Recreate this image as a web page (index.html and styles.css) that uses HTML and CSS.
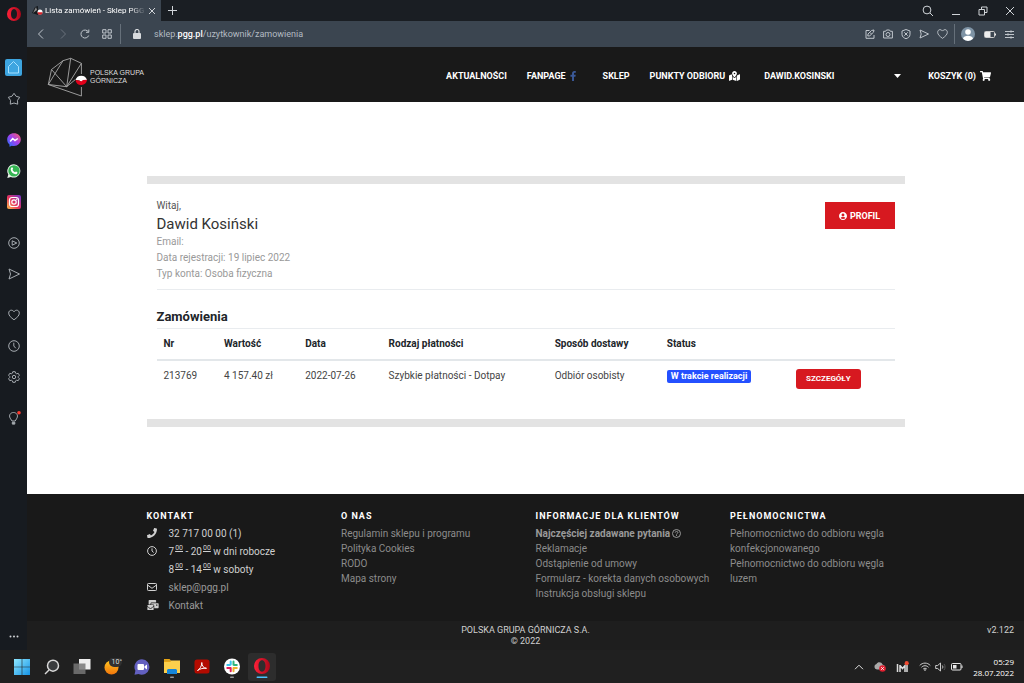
FILE: index.html
```html
<!DOCTYPE html>
<html lang="pl">
  <head>
    <meta charset="UTF-8" />
    <title>Lista zamówień - Sklep PGG</title>
    <link rel="stylesheet" href="styles.css">
  </head>

  <body>
    <div class="desktop">
      <div class="browser">
        <nav class="sidebar" aria-label="Opera">
          <button class="opera-menu" aria-label="Menu">
            <svg width="14" height="14" viewBox="0 0 14 14"><defs><linearGradient id="op" x1="0" x2="1"><stop offset="0" stop-color="#ff2038"/><stop offset="1" stop-color="#a8081a"/></linearGradient></defs><path fill="url(#op)" fill-rule="evenodd" d="M7 0a7 7 0 1 0 0 14A7 7 0 1 0 7 0zM7 2c2 0 3 2.300 3 5s-1 5-3 5-3-2.300-3-5 1-5 3-5z"/></svg>
          </button>
          <div class="side-group">
            <button class="side-item" aria-label="Home">
              <svg width="17" height="17" viewBox="0 0 17 17"><rect width="17" height="17" rx="2" fill="#3da5e0"/><path d="M3.500 7.500 8.500 2.500l5 5V14h-10z" fill="none" stroke="#a5e0ff" stroke-linejoin="round"/></svg>
            </button>
            <button class="side-item" aria-label="Zakładki">
              <svg class="line" width="14" height="14" viewBox="0 0 14 14"><path d="M7 1.300 9.100 4.300l3.600 1-2.200 3 .2 3.900L7 11l-3.700 1.200.2-3.900-2.200-3 3.600-1z"/></svg>
            </button>
          </div>
          <div class="side-group">
            <button class="side-item" aria-label="Messenger">
              <svg width="14" height="14" viewBox="0 0 14 14"><defs><linearGradient id="ms" x1="0" y1="1" x2="1" y2="0"><stop offset="0" stop-color="#1a78ff"/><stop offset=".5" stop-color="#a040f0"/><stop offset="1" stop-color="#ff6060"/></linearGradient></defs><path fill="url(#ms)" d="M7 .3c4 0 6.800 2.700 6.800 6.300S11 13 7 13c-.8 0-1.500-.1-2.200-.3L2.500 13.700v-2.100C1 10.500.2 8.800.2 6.600.2 3 3 .3 7 .3z"/><path d="m3.200 8.500 2.500-3 2.300 2 2.800-2" fill="none" stroke="#fff" stroke-width="1.500"/></svg>
            </button>
            <button class="side-item" aria-label="WhatsApp">
              <svg width="14" height="14" viewBox="0 0 14 14"><path fill="#e8f3e9" d="M7 .2A6.700 6.700 0 1 1 3.900 13L.3 13.900l1-3.500A6.700 6.700 0 0 1 7 .2z"/><circle cx="7" cy="6.900" r="5.700" fill="#35b653"/><path fill="#fff" d="M4.600 3.500c.6-.5 1-.1 1.500 1.300l-.6 1c.5 1.200 1.300 2 2.600 2.500l.8-.8c1.300.5 1.800.9 1.500 1.400-.5 1.500-2 1.500-3.300.9C5.600 9.200 4.400 7.900 3.900 6.300c-.4-1.200-.1-2.200.7-2.800z"/></svg>
            </button>
            <button class="side-item" aria-label="Instagram">
              <svg width="14" height="14" viewBox="0 0 14 14"><defs><linearGradient id="ig" x1="0" y1="1" x2="1" y2="0"><stop offset="0" stop-color="#fdc04a"/><stop offset=".45" stop-color="#e8335c"/><stop offset="1" stop-color="#6c35d0"/></linearGradient></defs><rect width="14" height="14" rx="2" fill="url(#ig)"/><g fill="none" stroke="#fff" stroke-width="1.200"><rect x="2.500" y="2.500" width="9" height="9" rx="2.500"/><circle cx="7" cy="7" r="2.200"/></g><circle cx="9.700" cy="4.300" r=".7" fill="#fff"/></svg>
            </button>
          </div>
          <div class="side-group">
            <button class="side-item" aria-label="Player">
              <svg class="line" width="12" height="12" viewBox="0 0 12 12"><circle cx="6" cy="6" r="5.300"/><path d="M4.200 3.800v4.400L8.800 6z"/></svg>
            </button>
            <button class="side-item" aria-label="Flow">
              <svg class="line" width="12" height="12" viewBox="0 0 12 12"><path d="M1 1l10.500 5L1 11l1.500-5z"/></svg>
            </button>
          </div>
          <div class="side-group">
            <button class="side-item" aria-label="Ulubione">
              <svg class="line" width="12" height="12" viewBox="0 0 12 12"><path d="M6 10.800C3 8.600.7 6.700.7 4.100.7 2.300 1.900 1.200 3.300 1.200 4.500 1.200 5.400 1.800 6 2.800c.6-1 1.500-1.600 2.700-1.600 1.400 0 2.600 1.100 2.600 2.900 0 2.600-2.300 4.500-5.300 6.700z"/></svg>
            </button>
            <button class="side-item" aria-label="Historia">
              <svg class="line" width="12" height="12" viewBox="0 0 12 12"><circle cx="6" cy="6" r="5.300"/><path d="M5.800 2.700V6l2 2.300"/></svg>
            </button>
            <button class="side-item" aria-label="Ustawienia">
              <svg class="line" width="12" height="12" viewBox="0 0 12 12"><path d="M4.800.7h2.400l.4 1.500 1.100.6 1.500-.5 1.200 2-1.100 1.100v1.200l1.100 1.100-1.200 2-1.500-.5-1.100.6-.4 1.500H4.800l-.4-1.500-1.100-.6-1.500.5-1.200-2 1.100-1.100V5.400L.6 4.300l1.200-2 1.500.5 1.100-.6z"/><circle cx="6" cy="6" r="1.700"/></svg>
            </button>
          </div>
          <div class="side-group">
            <button class="side-item" aria-label="Porady">
              <svg class="line" width="14" height="14" viewBox="0 0 14 14"><path d="M5 10 3.200 7.200C1.500 4.200 3.500 1.500 6.500 1.500s5 2.700 3.400 5.700L8.200 10z"/><path fill="#a6abb0" d="M5.300 11.300h2.500v1.800H5.300z"/><circle cx="12" cy="1.800" r="1.800" fill="#ff3b30" stroke="none"/></svg>
            </button>
          </div>
          <button class="side-more" aria-label="Więcej">
            <svg width="10" height="3" viewBox="0 0 10 3" fill="#d0d3d6"><circle cx="1.500" cy="1.500" r="1"/><circle cx="5" cy="1.500" r="1"/><circle cx="8.500" cy="1.500" r="1"/></svg>
          </button>
        </nav>

        <div class="window">
          <div class="tab-bar">
            <div class="tab">
              <svg width="11" height="10" viewBox="0 0 11 10"><path d="M0 7 3 1l3-1v9z" fill="#15191d"/><path d="M1 7 4 1l1 3z" fill="#888"/><circle cx="8" cy="6" r="2.500" fill="#fff"/><path d="M5.500 6.200h5A2.500 2.500 0 0 1 5.500 6.200z" fill="#d8232a"/></svg>
              <span class="tab-title">Lista zamówień - Sklep PGG</span>
              <button class="tab-btn" aria-label="Zamknij kartę">
                <svg class="line" width="8" height="8" viewBox="0 0 8 8"><path d="M1 1l6 6M7 1 1 7"/></svg>
              </button>
            </div>
            <button class="tab-btn new-tab" aria-label="Nowa karta">
              <svg class="line" width="9" height="9" viewBox="0 0 9 9"><path d="M4.500 0v9M0 4.500h9"/></svg>
            </button>
            <div class="window-btns">
              <button class="tab-btn" aria-label="Szukaj"><svg class="line" width="12" height="12" viewBox="0 0 12 12"><circle cx="5" cy="5" r="3.900"/><path d="m8 8 3 3"/></svg></button>
              <button class="tab-btn" aria-label="Minimalizuj"><svg class="line" width="10" height="10" viewBox="0 0 10 10"><path d="M1 8.500h8"/></svg></button>
              <button class="tab-btn" aria-label="Przywróć"><svg class="line" width="10" height="10" viewBox="0 0 10 10"><path d="M1 3.500h5.500V9H1zM3.500 3.500V1H9v5.500H6.500"/></svg></button>
              <button class="tab-btn" aria-label="Zamknij"><svg class="line" width="10" height="10" viewBox="0 0 10 10"><path d="m1 1 8 8M9 1 1 9"/></svg></button>
            </div>
          </div>

          <div class="toolbar">
            <div class="nav-btns">
              <button class="tab-btn" aria-label="Wstecz"><svg class="line" width="10" height="10" viewBox="0 0 10 10"><path d="M7 .5 2.500 5 7 9.500"/></svg></button>
              <button class="tab-btn dim" aria-label="Dalej"><svg class="line" width="10" height="10" viewBox="0 0 10 10"><path d="M3 .5 7.500 5 3 9.500"/></svg></button>
              <button class="tab-btn" aria-label="Odśwież"><svg class="line" width="10" height="10" viewBox="0 0 10 10"><path d="M8.700 6.500A4 4 0 1 1 8.300 2.800M8.800.5v2.800H6"/></svg></button>
              <button class="tab-btn" aria-label="Szybkie wybieranie"><svg class="line" width="10" height="10" viewBox="0 0 10 10"><path d="M.7.7H4V4H.7zM6 .7h3.300V4H6zM.7 6H4v3.300H.7zM6 6h3.300v3.300H6z"/></svg></button>
            </div>
            <div class="address">
              <svg width="8" height="10" viewBox="0 0 8 10"><rect y="4" width="8" height="6" rx="1" fill="#d8dbde"/><path d="M2 4V2.500a2 2 0 0 1 4 0V4" fill="none" stroke="#d8dbde" stroke-width="1.200"/></svg>
              <span class="url">sklep.<b>pgg.pl</b>/uzytkownik/zamowienia</span>
            </div>
            <div class="tools">
              <button class="tab-btn" aria-label="Edytuj"><svg class="line" width="10" height="10" viewBox="0 0 10 10"><path d="M4.500 1.500H1v7.800h8V6M9 1 6.500 1.500 3 5l-.2 2 2-.2 3.700-3.600zM5 3.500l1.500 1.500"/></svg></button>
              <button class="tab-btn" aria-label="Zrzut ekranu"><svg class="line" width="10" height="10" viewBox="0 0 10 10"><path d="M.6 2.300h2L3.500 1h3l.9 1.300h2V9H.6z"/><circle cx="5" cy="5.500" r="2"/></svg></button>
              <button class="tab-btn" aria-label="Blokada reklam"><svg class="line" width="10" height="10" viewBox="0 0 10 10"><path d="M5 .5 9 2v3.500C9 7.800 7 9 5 9.700 3 9 1 7.800 1 5.500V2zM3.300 3.300l3.400 3.400M6.700 3.300 3.300 6.700"/></svg></button>
              <button class="tab-btn" aria-label="Wyślij"><svg class="line" width="10" height="10" viewBox="0 0 10 10"><path d="M1 1l8.500 4L1 9l1.200-4z"/></svg></button>
              <button class="tab-btn" aria-label="Dodaj zakładkę"><svg class="line" width="11" height="10" viewBox="0 0 12 11"><path d="M6 10.300C3 8.100.7 6.200.7 3.600.7 1.800 1.900.7 3.300.7 4.500.7 5.400 1.300 6 2.300 6.600 1.300 7.500.7 8.700.7c1.400 0 2.600 1.100 2.600 2.900 0 2.600-2.300 4.500-5.300 6.700z"/></svg></button>
            </div>
            <div class="account">
              <button class="tab-btn" aria-label="Profil Opery"><svg width="14" height="14" viewBox="0 0 14 14"><circle cx="7" cy="7" r="7" fill="#7e93a5"/><circle cx="7" cy="5" r="2.800" fill="#fff"/><path d="M2 11.800C2.500 9.500 4.500 8.800 7 8.800s4.500.7 5 3A7 7 0 0 1 2 11.800z" fill="#fff"/></svg></button>
              <button class="tab-btn" aria-label="Oszczędzanie baterii"><svg width="12" height="7" viewBox="0 0 12 7"><rect x=".5" y=".5" width="10" height="6" rx="1" fill="none" stroke="#ccc"/><path d="M1 1h5.500v5H1zM11 2.500h1v2h-1z" fill="#eee"/></svg></button>
              <button class="tab-btn" aria-label="Łatwa konfiguracja"><svg class="line" width="9" height="9" viewBox="0 0 9 9"><path d="M0 1.500h9M0 4.500h9M0 7.500h9M6 .3v2.400M3 3.300v2.400M6 6.300v2.400"/></svg></button>
            </div>
          </div>

          <div class="page">
            <header class="site-header">
              <a class="logo" href="#">
                <svg width="40" height="40" viewBox="0 0 40 40"><path d="M34.400 17V6.300L23.700 1.300 16 3.700 4.500 12.500 1.300 27.500 34.400 39V30M4.500 12.500l15.200 17.200L23.700 1.300M1.300 27.500l18.400 2.200L34.400 6.300M1.300 27.500 16 3.700M19.700 29.700l8.500-7" fill="none" stroke="#a8a8a8" stroke-width=".9"/><path d="M28.500 23a6 6 0 0 1 11.500 0l-3.500 1-2 1-2-1.500z" fill="#fff"/><path d="m28.500 23 3.500.5 2 1 2-1.500 4-.2a5.800 5.800 0 0 1-11.500.2z" fill="#e2001a"/></svg>
                <span class="logo-text">POLSKA GRUPA<br>GÓRNICZA</span>
              </a>
              <nav class="main-nav">
                <a href="#">AKTUALNOŚCI</a>
                <a class="fanpage" href="#">FANPAGE
                  <svg width="6" height="10" viewBox="22 0 264 512" fill="#3b5998"><path d="M279.140 288l14.220-92.660h-88.910v-60.130c0-25.350 12.420-50.060 52.240-50.060h40.420V6.260S260.430 0 225.360 0c-73.220 0-121.080 44.380-121.080 124.720v70.620H22.890V288h81.390v224h100.170V288z"/></svg>
                </a>
                <a href="#">SKLEP</a>
                <a class="pickup" href="#">PUNKTY ODBIORU
                  <svg width="11" height="10" viewBox="0 0 576 512" fill="#fff"><path d="M288 0c-69.590 0-126 56.410-126 126 0 56.260 82.350 158.800 113.900 196.020 6.390 7.540 17.820 7.540 24.200 0C331.650 284.800 414 182.260 414 126 414 56.410 357.590 0 288 0zm0 168c-23.200 0-42-18.800-42-42s18.800-42 42-42 42 18.800 42 42-18.800 42-42 42zM20.120 215.950A32 32 0 0 0 0 245.660v250.320c0 11.320 11.430 19.060 21.940 14.860L160 448V214.920c-8.840-15.980-16.070-31.540-21.250-46.420zM288 359.670c-14.070 0-27.380-6.180-36.510-16.960-19.660-23.200-40.570-49.620-59.490-76.720v182l192 64V266c-18.920 27.090-39.820 53.520-59.490 76.720-9.130 10.770-22.440 16.950-36.510 16.950zm266.060-198.510L416 224v288l139.880-55.950A32 32 0 0 0 576 426.340V176.020c0-11.320-11.430-19.060-21.940-14.860z"/></svg>
                </a>
                <button class="user-menu">DAWID.KOSINSKI
                  <svg width="7" height="4" viewBox="0 0 7 4"><path d="M0 0h7L3.500 4z" fill="#fff"/></svg>
                </button>
                <a href="#">KOSZYK (0)
                  <svg width="11" height="10" viewBox="0 0 576 512" fill="#fff"><path d="M528.120 301.319l47.273-208C578.806 78.301 567.391 64 551.990 64H159.208l-9.166-44.810C147.758 8.021 137.930 0 126.529 0H24C10.745 0 0 10.745 0 24v16c0 13.255 10.745 24 24 24h69.883l70.248 343.435C147.325 417.100 136 435.222 136 456c0 30.928 25.072 56 56 56s56-25.072 56-56c0-15.674-6.447-29.835-16.824-40h209.647C430.447 426.165 424 440.326 424 456c0 30.928 25.072 56 56 56s56-25.072 56-56c0-22.172-12.888-41.332-31.579-50.405l5.517-24.276c3.413-15.018-8.002-29.319-23.403-29.319H218.117l-6.545-32h293.145c11.206 0 20.920-7.754 23.403-18.681z"/></svg>
                </a>
              </nav>
            </header>

            <main class="content">
              <section class="panel">
                <div class="profile">
                  <div>
                    <p class="hello">Witaj,</p>
                    <h1 class="user-name">Dawid Kosiński</h1>
                    <p class="meta">Email:</p>
                    <p class="meta">Data rejestracji: 19 lipiec 2022</p>
                    <p class="meta">Typ konta: Osoba fizyczna</p>
                  </div>
                  <button class="profile-btn">
                    <svg width="8" height="8" viewBox="0 8 496 496" fill="#fff"><path d="M248 8C111 8 0 119 0 256s111 248 248 248 248-111 248-248S385 8 248 8zm0 96c48.600 0 88 39.400 88 88s-39.400 88-88 88-88-39.400-88-88 39.400-88 88-88zm0 344c-58.700 0-111.300-26.600-146.500-68.200 18.800-35.400 55.600-59.800 98.500-59.800 2.400 0 4.800.4 7.100 1.100 13 4.200 26.600 6.900 40.900 6.900 14.300 0 28-2.700 40.900-6.900 2.300-.7 4.700-1.100 7.100-1.100 42.900 0 79.700 24.400 98.500 59.800C359.300 421.400 306.700 448 248 448z"/></svg>
                    PROFIL
                  </button>
                </div>
                <h2 class="orders-title">Zamówienia</h2>
                <table class="orders">
                  <colgroup>
                    <col class="c-nr"><col class="c-value"><col class="c-date"><col class="c-pay"><col class="c-ship"><col class="c-status"><col>
                  </colgroup>
                  <thead>
                    <tr>
                      <th>Nr</th>
                      <th>Wartość</th>
                      <th>Data</th>
                      <th>Rodzaj płatności</th>
                      <th>Sposób dostawy</th>
                      <th>Status</th>
                      <th></th>
                    </tr>
                  </thead>
                  <tbody>
                    <tr>
                      <td>213769</td>
                      <td>4 157.40 zł</td>
                      <td>2022-07-26</td>
                      <td>Szybkie płatności - Dotpay</td>
                      <td>Odbiór osobisty</td>
                      <td><span class="badge">W trakcie realizacji</span></td>
                      <td><button class="details-btn">SZCZEGÓŁY</button></td>
                    </tr>
                  </tbody>
                </table>
              </section>
            </main>

            <footer class="footer">
              <div class="footer-cols">
                <div class="contact">
                  <h3>KONTAKT</h3>
                  <div class="contact-row"><svg width="10" height="10" viewBox="0 0 512 512" fill="#d0d0d0"><path d="M493.400 24.600l-104-24c-11.300-2.600-22.900 3.300-27.500 13.900l-48 112c-4.200 9.800-1.400 21.300 6.900 28l60.600 49.600c-36 76.700-98.900 140.500-177.200 177.200l-49.600-60.600c-6.800-8.300-18.200-11.100-28-6.900l-112 48C3.900 366.500-2 378.100.6 389.400l24 104C27.100 504.200 36.700 512 48 512c256.100 0 464-207.500 464-464 0-11.200-7.700-20.900-18.600-23.400z"/></svg><span>32 717 00 00 (1)</span></div>
                  <div class="contact-row"><svg width="10" height="10" viewBox="0 0 10 10" fill="none" stroke="#d0d0d0"><circle cx="5" cy="5" r="4.400"/><path d="M5 2.300V5l1.700 1.500"/></svg><span>7<sup>00</sup> - 20<sup>00</sup> w dni robocze</span></div>
                  <div class="contact-row"><i></i><span>8<sup>00</sup> - 14<sup>00</sup> w soboty</span></div>
                  <div class="contact-row"><svg width="10" height="8" viewBox="0 0 10 8" fill="none" stroke="#d0d0d0"><rect x=".5" y=".5" width="9" height="7" rx=".8"/><path d="M.5 2 5 5.300 9.500 2"/></svg><a href="#">sklep@pgg.pl</a></div>
                  <div class="contact-row"><svg width="12" height="10" viewBox="0 0 576 512" fill="#d0d0d0"><path d="M160 448c-25.600 0-51.200-22.400-64-32-64-44.800-83.200-60.800-96-70.400V480c0 17.670 14.330 32 32 32h256c17.670 0 32-14.330 32-32V345.600c-12.800 9.600-32 25.600-96 70.400-12.800 9.600-38.400 32-64 32zm128-192H32c-17.670 0-32 14.330-32 32v16c25.600 19.200 22.400 19.200 115.200 86.400 9.600 6.400 28.800 25.600 44.800 25.600s35.200-19.200 44.800-22.400c92.800-67.200 89.600-67.200 115.200-86.400V288c0-17.670-14.330-32-32-32zm256-96H224c-17.670 0-32 14.330-32 32v32h96c33.210 0 60.590 25.420 63.710 57.820l.29-.22V416h192c17.670 0 32-14.330 32-32V192c0-17.670-14.330-32-32-32zm-32 128h-64v-64h64v64zm-352-96c0-35.290 28.710-64 64-64h224V32c0-17.670-14.330-32-32-32H96C78.330 0 64 14.330 64 32v192h96v-32z"/></svg><a href="#">Kontakt</a></div>
                </div>
                <div class="links">
                  <h3>O NAS</h3>
                  <a href="#">Regulamin sklepu i programu</a>
                  <a href="#">Polityka Cookies</a>
                  <a href="#">RODO</a>
                  <a href="#">Mapa strony</a>
                </div>
                <div class="links">
                  <h3>INFORMACJE DLA KLIENTÓW</h3>
                  <a class="faq" href="#">Najczęściej zadawane pytania <svg width="9" height="9" viewBox="0 0 9 9" fill="none" stroke="#999"><circle cx="4.500" cy="4.500" r="4"/><path d="M3.200 3.600C3.300 2.800 3.800 2.400 4.500 2.400c1.600 0 1.800 1.600.7 2.100-.5.200-.7.500-.7 1M4.500 6v.9"/></svg></a>
                  <a href="#">Reklamacje</a>
                  <a href="#">Odstąpienie od umowy</a>
                  <a href="#">Formularz - korekta danych osobowych</a>
                  <a href="#">Instrukcja obsługi sklepu</a>
                </div>
                <div class="links">
                  <h3>PEŁNOMOCNICTWA</h3>
                  <a href="#">Pełnomocnictwo do odbioru węgla konfekcjonowanego</a>
                  <a href="#">Pełnomocnictwo do odbioru węgla luzem</a>
                </div>
              </div>
              <div class="copyright">
                <span class="company">POLSKA GRUPA GÓRNICZA S.A.<br>© 2022</span>
                <span class="version">v2.122</span>
              </div>
            </footer>
          </div>
        </div>
      </div>

      <div class="taskbar">
        <div class="apps">
          <button class="app" aria-label="Start"><svg width="16" height="16" viewBox="0 0 16 16"><defs><linearGradient id="win" x1="0" y1="0" x2="1" y2="1"><stop offset="0" stop-color="#8fe8ff"/><stop offset="1" stop-color="#1593e6"/></linearGradient></defs><path fill="url(#win)" d="M0 0h7.700v7.700H0zM8.300 0H16v7.700H8.300zM0 8.300h7.700V16H0zM8.300 8.300H16V16H8.300z"/></svg></button>
          <button class="app" aria-label="Szukaj"><svg width="16" height="16" viewBox="0 0 16 16" fill="#3a3c3e" stroke="#d8d8d8" stroke-width="1.500"><circle cx="9" cy="6.700" r="5.500"/><path d="m5 11-4 4"/></svg></button>
          <button class="app" aria-label="Widok zadań"><svg width="18" height="16" viewBox="0 0 18 16"><path d="M6 0h11.500v10.500H6z" fill="#eee"/><path d="M.5 4.500h12V15H.5z" fill="#777" opacity=".85"/></svg></button>
          <button class="app" aria-label="Pogoda"><svg width="20" height="18" viewBox="0 0 20 18"><defs><linearGradient id="moon" x2="0" y2="1"><stop offset="0" stop-color="#ffc420"/><stop offset="1" stop-color="#f2760c"/></linearGradient></defs><circle cx="9.500" cy="9.500" r="7" fill="url(#moon)"/><rect x="7" y="-1" width="13" height="10" rx="5" fill="#303030"/></svg><span class="temp">10°</span></button>
          <button class="app" aria-label="Czat"><svg width="16" height="16" viewBox="0 0 16 16"><path d="M8 .3A7.700 7.700 0 1 1 4.500 15L.5 15.800l.9-4A7.700 7.700 0 0 1 8 .3z" fill="#6360c0"/><rect x="3.500" y="5" width="6.500" height="6" rx="1" fill="#fff"/><path d="m10.500 7.300 2.500-1.800v5l-2.500-1.800z" fill="#fff"/></svg></button>
          <button class="app" aria-label="Eksplorator plików"><svg width="18" height="22" viewBox="0 0 18 22"><path d="M1 3h5.500L8 4.500H1z" fill="#e8a413"/><path d="M1 4.500h16V17H1z" fill="#fbcf4c"/><path d="M1 4.500h6l1 1.500H1z" fill="#e8a413"/><path d="M4 18v-4l1-1h8l1 1v4z" fill="#1686d9"/><rect x="7" y="20.500" width="4" height="1.500" rx=".7" fill="#999"/></svg></button>
          <button class="app" aria-label="Acrobat"><svg width="16" height="16" viewBox="0 0 16 16"><rect x=".5" y=".5" width="15" height="14" rx="2.500" fill="#b30b00"/><path d="M3.500 11.500c2-1 4.500-4.500 4.300-8 0 3.500 1.700 5.500 4.700 5.800-3.500-.3-6 .2-9 2.200z" fill="none" stroke="#fff"/></svg></button>
          <button class="app" aria-label="Slack"><svg width="16" height="22" viewBox="0 0 16 22"><circle cx="8" cy="10.500" r="8" fill="#fff"/><g fill="none" stroke-width="2" stroke-linecap="round"><path d="M6.700 5.500v3M3.300 9H6" stroke="#36c5f0"/><path d="M9.500 8.800V5.500M12.800 9H10" stroke="#2eb67d"/><path d="M9.500 12v3.300M12.800 12H9.700" stroke="#ecb22e"/><path d="M6.700 12v3.300M3.300 12H6" stroke="#e01e5a"/></g><rect x="6" y="20.500" width="4" height="1.500" rx=".7" fill="#999"/></svg></button>
          <button class="app active" aria-label="Opera"><svg width="16" height="22" viewBox="0 0 16 22"><path fill="url(#op)" fill-rule="evenodd" d="M8 2a8 8 0 1 0 0 16A8 8 0 1 0 8 2zM8 4.300c2.200 0 3.500 2.600 3.500 5.700s-1.300 5.700-3.500 5.700S4.500 13.100 4.500 10 5.800 4.300 8 4.300z"/><rect x="2.500" y="20.500" width="11" height="1.500" rx=".7" fill="#4cc2ff"/></svg></button>
        </div>
        <div class="tray">
          <button class="tray-btn" aria-label="Ukryte ikony"><svg class="line" width="10" height="6" viewBox="0 0 10 6"><path d="M1 5.200 5 1.200l4 4"/></svg></button>
          <button class="tray-btn" aria-label="OneDrive"><svg width="12" height="11" viewBox="0 0 12 11"><path d="M3 8.500A2.800 2.800 0 0 1 2.500 3C3.500.5 7.500.5 8.500 3.500L11 5v3.500z" fill="#aaa"/><circle cx="8.500" cy="7.500" r="3.300" fill="#e02030"/><path d="m7.200 6.200 2.600 2.600M9.800 6.200 7.200 8.800" stroke="#fff" stroke-width=".9"/></svg></button>
          <button class="tray-btn" aria-label="Powiadomienia"><svg width="13" height="12" viewBox="0 0 13 12"><path d="M1.500 3v8M4 4v7M4 4.500l2.500 3 2.500-3V11M11 4v7" fill="none" stroke="#ddd" stroke-width="1.500"/><circle cx="10.700" cy="2.200" r="2.100" fill="#ef4a30"/></svg></button>
          <button class="tray-btn quick" aria-label="Szybkie ustawienia">
            <svg width="12" height="9" viewBox="0 0 12 9" fill="none" stroke="#ccc"><path d="M.7 3.500C3.500.3 8.500.3 11.300 3.500M2.500 5.300c2-2.100 5-2.100 7 0M4.200 7c1-1 2.600-1 3.600 0"/><circle cx="6" cy="8" r=".5"/></svg>
            <svg width="12" height="10" viewBox="0 0 12 10" fill="none" stroke="#ccc"><path d="M.7 3.500h2L5.500 1v8L2.700 6.500h-2zM7.300 3.500c.7.800.7 2.200 0 3"/><path d="M9 2c1.400 1.500 1.400 4.500 0 6" stroke="#555"/></svg>
            <svg width="12" height="8" viewBox="0 0 12 8"><rect x=".5" y=".5" width="9.500" height="6.500" rx="1" fill="none" stroke="#e8e8e8"/><path d="M2 2h3.500v3.500H2zM10.500 2.500h1v2.500h-1z" fill="#e8e8e8"/></svg>
          </button>
          <div class="clock">05:29<br>28.07.2022</div>
        </div>
      </div>
    </div>
  </body>
</html>
```

FILE: styles.css
```css
* {
  box-sizing: border-box;
}

body {
  margin: 0;
  font-family: Roboto, "Liberation Sans", sans-serif;
  font-size: 10px;
  color: #212529;
}

h1, h2, h3, p {
  margin: 0;
}

a {
  color: inherit;
  text-decoration: none;
}

button {
  padding: 0;
  border: 0;
  background: none;
  color: inherit;
  font: inherit;
  cursor: pointer;
}

svg {
  display: block;
  flex: none;
}

.line {
  fill: none;
  stroke: currentColor;
}

.desktop {
  display: flex;
  flex-direction: column;
  min-height: 100vh;
}

.browser {
  display: flex;
  flex: 1;
}

/* opera sidebar */
.sidebar {
  display: flex;
  flex-direction: column;
  align-items: center;
  gap: 10px;
  width: 27px;
  flex: none;
  background: #171b20;
  color: #a6abb0;
}

.opera-menu {
  display: flex;
  align-items: center;
  height: 27px;
  margin-bottom: 15px;
}

.side-item {
  display: flex;
  align-items: center;
  justify-content: center;
  width: 27px;
  height: 31px;
}

.side-more {
  margin-top: auto;
  padding: 12px 0;
}

.window {
  display: flex;
  flex-direction: column;
  flex: 1;
  min-width: 0;
}

.tab-bar {
  display: flex;
  align-items: center;
  height: 21px;
  background: #1a1e23;
  color: #d0d4d8;
}

.tab {
  display: flex;
  align-items: center;
  gap: 2px;
  width: 134px;
  height: 21px;
  padding: 0 5px;
  background: #3b4550;
}

.tab-title {
  flex: 1;
  overflow: hidden;
  white-space: nowrap;
  font-size: 8px;
  color: #fff;
  mask-image: linear-gradient(to right, #000 85%, transparent);
}

.tab-btn {
  display: flex;
  align-items: center;
  justify-content: center;
}

.new-tab {
  margin-left: 7px;
}

.window-btns {
  display: flex;
  gap: 17px;
  margin-left: auto;
  padding-right: 9px;
}

.toolbar {
  display: flex;
  align-items: center;
  height: 26px;
  background: #3b4550;
  color: #c0c6cc;
}

.nav-btns {
  display: flex;
  gap: 12px;
  padding: 0 8px 0 9px;
  height: 20px;
  border-right: 1px solid #66707a;
}

.dim {
  opacity: 0.35;
}

.address {
  display: flex;
  align-items: center;
  gap: 13px;
  flex: 1;
  padding-left: 12px;
}

.url {
  font-size: 9px;
  color: #b4bbc2;
}

.url b {
  font-weight: 500;
  color: #fff;
}

.tools {
  display: flex;
  gap: 8px;
  height: 20px;
  padding-right: 6px;
  border-right: 1px solid #66707a;
}

.account {
  display: flex;
  gap: 9px;
  padding: 0 10px 0 6px;
}

/* shop page */
.page {
  display: flex;
  flex-direction: column;
  flex: 1;
  background: #fff;
}

.site-header {
  display: flex;
  align-items: center;
  justify-content: space-between;
  height: 55px;
  padding: 4px 33px 0 20px;
  background: #191919;
  color: #fff;
}

.logo {
  display: flex;
  align-items: center;
  gap: 3px;
}

.logo-text {
  font-family: "Liberation Sans", Arial, sans-serif;
  font-size: 7px;
  line-height: 8px;
  color: #ddd;
}

.main-nav {
  display: flex;
  align-items: center;
  gap: 20px;
  padding-bottom: 2px;
  font-size: 9px;
  font-weight: 700;
}

.main-nav a,
.user-menu {
  display: flex;
  align-items: center;
  gap: 4px;
}

.fanpage {
  padding-right: 7px;
}

.pickup {
  padding-right: 4px;
}

.user-menu {
  justify-content: space-between;
  width: 137px;
  margin-right: 7px;
}

.content {
  flex: 1;
  padding: 74px 16px 66px;
}

.panel {
  max-width: 758px;
  margin: 0 auto;
  padding: 14px 10px 22px;
  border-top: 8px solid #e3e3e3;
  border-bottom: 8px solid #e3e3e3;
}

.profile {
  display: flex;
  align-items: flex-start;
  justify-content: space-between;
  padding-bottom: 7px;
  border-bottom: 1px solid #e9ecef;
}

.hello {
  line-height: 16px;
  color: #555;
}

.user-name {
  font-size: 15px;
  font-weight: 400;
  line-height: 20px;
  color: #333;
}

.meta {
  line-height: 16px;
  color: #999;
}

.profile-btn {
  display: flex;
  align-items: center;
  justify-content: center;
  gap: 3px;
  width: 70px;
  height: 27px;
  margin-top: 4px;
  background: #d71920;
  color: #fff;
  font-size: 9px;
  font-weight: 700;
}

.orders-title {
  margin-top: 17px;
  padding-bottom: 2px;
  font-size: 13px;
  font-weight: 700;
  line-height: 19px;
}

.orders {
  width: 100%;
  table-layout: fixed;
  border-collapse: separate;
  border-spacing: 0;
  border-top: 1px solid #e9ecef;
}

.c-nr { width: 8.2%; }
.c-value { width: 11%; }
.c-date { width: 11.3%; }
.c-pay { width: 22.5%; }
.c-ship { width: 15.2%; }
.c-status { width: 17.5%; }

.orders th,
.orders td {
  padding: 8px 7px;
  text-align: left;
  vertical-align: top;
  line-height: 14px;
  white-space: nowrap;
}

.orders th {
  border-bottom: 2px solid #e3e7ea;
}

.orders td {
  color: #444;
}

.badge {
  display: inline-block;
  padding: 0 4px;
  border-radius: 2px;
  background: #2450ff;
  color: #fff;
  font-size: 9px;
  font-weight: 700;
  line-height: 13px;
}

.details-btn {
  display: block;
  width: 65px;
  height: 20px;
  border-radius: 3px;
  background: #d71920;
  color: #fff;
  font-size: 8px;
  font-weight: 700;
}

.footer {
  background: #191919;
  color: #d0d0d0;
}

.footer-cols {
  display: grid;
  grid-template-columns: repeat(4, 1fr);
  max-width: 778px;
  margin: 0 auto;
  padding: 15px 0 7px;
}

.footer-cols h3 {
  font-size: 9px;
  font-weight: 700;
  letter-spacing: 1px;
  line-height: 15px;
  color: #fff;
}

.contact {
  padding-left: 10px;
}

.contact-row {
  display: grid;
  grid-template-columns: 12px auto;
  justify-content: start;
  align-items: center;
  gap: 10px;
  height: 18px;
}

.contact-row a {
  color: #999;
}

.contact-row sup {
  margin-left: 1px;
  font-size: 7px;
  line-height: 0;
  text-decoration: underline;
}

.links {
  display: flex;
  flex-direction: column;
  padding: 0 10px;
}

.links h3 {
  margin-bottom: 2px;
  white-space: nowrap;
}

.links a {
  line-height: 15px;
  color: #8c8c8c;
}

.links .faq {
  display: flex;
  align-items: center;
  gap: 2px;
  font-weight: 700;
  white-space: nowrap;
  color: #999;
}

.copyright {
  display: grid;
  grid-template-columns: 1fr auto 1fr;
  height: 29px;
  padding: 4px 10px 0;
  background: #1e1e1e;
  font-size: 9px;
  line-height: 11px;
}

.company {
  grid-column: 2;
  text-align: center;
}

.version {
  text-align: right;
}

/* windows taskbar */
.taskbar {
  display: flex;
  align-items: center;
  justify-content: space-between;
  height: 33px;
  padding: 0 10px 0 8px;
  background: #202020;
  color: #ddd;
}

.apps {
  display: flex;
  gap: 2px;
}

.app {
  position: relative;
  display: flex;
  align-items: center;
  justify-content: center;
  width: 28px;
  height: 28px;
  border-radius: 3px;
}

.active {
  background: #2d2d2d;
}

.temp {
  position: absolute;
  top: 4px;
  right: 4px;
  font-size: 7px;
  line-height: 10px;
}

.tray {
  display: flex;
  align-items: center;
  gap: 10px;
}

.quick {
  display: flex;
  align-items: center;
  gap: 4px;
}

.clock {
  font-family: "Open Sans", sans-serif;
  font-size: 8px;
  line-height: 11px;
  text-align: right;
  color: #fff;
}
```
